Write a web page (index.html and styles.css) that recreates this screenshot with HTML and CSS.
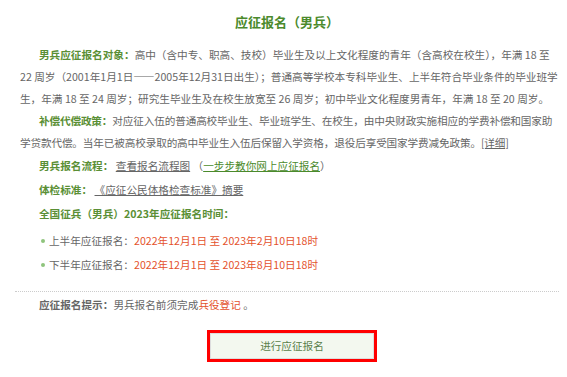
FILE: index.html
```html
<!DOCTYPE html>
<html lang="zh-CN">
<head>
    <meta charset="UTF-8">
    <meta name="viewport" content="width=device-width, initial-scale=1.0">
    <title>应征报名（男兵）</title>
    <link rel="stylesheet" href="styles.css">
</head>
<body>
    <div class="reg">
        <h2 class="reg-title">应征报名（男兵）</h2>
        <p class="reg-para"><b class="lbl">男兵应征报名对象：</b>高中（含中专、职高、技校）毕业生及以上文化程度的青年（含高校在校生），年满 18 至 22 周岁（2001年1月1日——2005年12月31日出生）；普通高等学校本专科毕业生、上半年符合毕业条件的毕业班学生，年满 18 至 24 周岁；研究生毕业生及在校生放宽至 26 周岁；初中毕业文化程度男青年，年满 18 至 20 周岁。</p>
        <p class="reg-para"><b class="lbl">补偿代偿政策：</b>对应征入伍的普通高校毕业生、毕业班学生、在校生，由中央财政实施相应的学费补偿和国家助学贷款代偿。当年已被高校录取的高中毕业生入伍后保留入学资格，退役后享受国家学费减免政策。<a class="link" href="#">[详细]</a></p>
        <p class="reg-item"><b class="lbl">男兵报名流程：</b> <a class="link" href="#">查看报名流程图</a> （<a class="link link-green" href="#">一步步教你网上应征报名</a>）</p>
        <p class="reg-item"><b class="lbl">体检标准：</b> <a class="link" href="#">《应征公民体格检查标准》摘要</a></p>
        <p class="reg-item"><b class="lbl">全国征兵（男兵）2023年应征报名时间：</b></p>
        <ul class="reg-dates">
            <li>上半年应征报名：<span class="red">2022年12月1日 至 2023年2月10日18时</span></li>
            <li>下半年应征报名：<span class="red">2022年12月1日 至 2023年8月10日18时</span></li>
        </ul>
        <div class="reg-tip"><b class="lbl lbl-dark">应征报名提示：</b>男兵报名前须完成<a class="red" href="#">兵役登记</a> 。</div>
        <div class="reg-action">
            <a class="reg-btn" href="#">进行应征报名</a>
        </div>
    </div>
</body>
</html>
```

FILE: styles.css
```css
body {
    margin: 0;
    padding: 0;
    background-color: #ffffff;
    font-family: "Noto Sans CJK SC", "Noto Sans", sans-serif;
    font-size: 10.63px;
    color: #666666;
}
.reg {
    margin: 0 8px 0 15px;
}
.reg-title {
    margin: 0;
    padding: 13px 0 0;
    height: 31px;
    line-height: 18px;
    font-size: 13px;
    font-weight: bold;
    color: #4b8a2c;
    text-align: center;
}
.reg-para,
.reg-item {
    margin: 0;
    padding: 0 0 0 5px;
    text-indent: 19px;
    line-height: 22px;
}
.reg-para + .reg-para {
    letter-spacing: -0.15px;
}
.reg-item {
    line-height: 24px;
}
.lbl {
    font-weight: bold;
    color: #5a8f35;
}
.lbl-dark {
    color: #666666;
}
.link {
    color: #666666;
    text-decoration: underline;
}
.link-green {
    color: #4b8a2c;
}
.red {
    color: #e4522c;
    text-decoration: none;
}
.reg-dates {
    list-style: none;
    margin: 3px 0 0;
    padding: 0 0 0 26px;
}
.reg-dates li {
    position: relative;
    padding-left: 8px;
    line-height: 24px;
}
.reg-dates li::before {
    content: "";
    position: absolute;
    left: 0;
    top: 10px;
    width: 4px;
    height: 4px;
    border-radius: 50%;
    background-color: #8fc47d;
}
.reg-tip {
    margin-top: 14px;
    padding: 2px 0 0 24px;
    border-top: 1px dotted #cccccc;
    line-height: 22px;
}
.reg-action {
    display: flex;
    justify-content: center;
    padding: 14px 0 0 10px;
}
.reg-btn {
    display: block;
    width: 164px;
    height: 26px;
    line-height: 26px;
    border: 3px solid #ff0000;
    box-shadow: inset 0 0 0 1px #dddddd;
    background-color: #f3f8ef;
    color: #5b7f4a;
    text-align: center;
    text-decoration: none;
}
```
